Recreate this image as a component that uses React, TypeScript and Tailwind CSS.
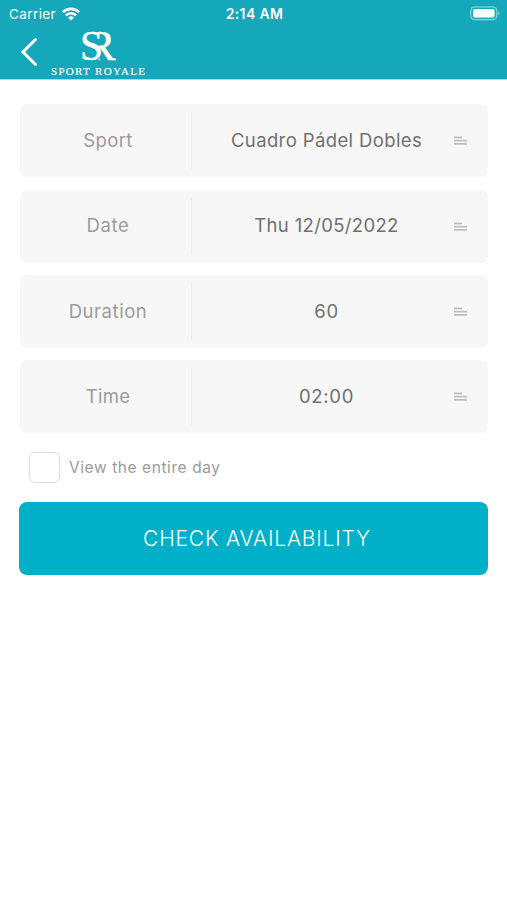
const rows = [
  { label: "Sport", value: "Cuadro Pádel Dobles", labelClass: "tracking-[0.4px]", valueClass: "tracking-[0.38px]" },
  { label: "Date", value: "Thu 12/05/2022", labelClass: "tracking-[0.6px]", valueClass: "tracking-[0.35px]" },
  { label: "Duration", value: "60", labelClass: "tracking-[0.55px]", valueClass: "tracking-[0.8px]" },
  { label: "Time", value: "02:00", labelClass: "tracking-[0.3px]", valueClass: "tracking-[0.7px]" },
];

function WifiIcon() {
  return (
    <svg width="18" height="14" viewBox="0 0 18 14" fill="none" stroke="white" strokeWidth="2.6">
      <path d="M1 5.2C5.5 0.7 12.5 0.7 17 5.2" />
      <path d="M3.8 8.4C6.8 5.5 11.2 5.5 14.2 8.4" />
      <path d="M6.1 10.5C7.8 8.9 10.2 8.9 11.9 10.5L9 13.4Z" fill="white" stroke="none" />
    </svg>
  );
}

function BatteryIcon() {
  return (
    <svg width="31" height="15" viewBox="0 0 31 15" fill="none">
      <rect x="1.8" y="1" width="26" height="12.6" rx="3.8" stroke="white" strokeOpacity="0.4" strokeWidth="1.6" />
      <rect x="4" y="3" width="21.6" height="8.6" rx="1.8" fill="white" />
      <path d="M29.2 5V9.6C31 8.8 31 5.8 29.2 5Z" fill="white" fillOpacity="0.4" />
    </svg>
  );
}

function Logo() {
  return (
    <svg className="overflow-visible" width="98" height="50" viewBox="0 0 98 50" fill="white" fontFamily="'Liberation Serif', serif">
      <defs>
        <clipPath id="bowl">
          <rect x="48.6" y="0" width="30" height="40" />
        </clipPath>
      </defs>
      <text x="30" y="32.8" fontSize="43" textLength="23" lengthAdjust="spacingAndGlyphs" stroke="white" strokeWidth="0.5">S</text>
      <g clipPath="url(#bowl)">
        <text x="36" y="32.8" fontSize="43" textLength="29.5" lengthAdjust="spacingAndGlyphs" stroke="white" strokeWidth="0.5">R</text>
      </g>
      <text x="1" y="47.8" fontSize="11" textLength="94" stroke="white" strokeWidth="0.15">SPORT ROYALE</text>
    </svg>
  );
}

function ListIcon() {
  return (
    <svg width="13" height="10" viewBox="0 0 13 10" fill="#bdbdbd">
      <rect y="0.6" width="8" height="1.7" />
      <rect y="3.8" width="13" height="1.7" />
      <rect y="7" width="13" height="1.7" />
    </svg>
  );
}

export default function App() {
  return (
    <div className="flex h-[900px] w-[507px] flex-col bg-white font-['Inter',sans-serif]">
      <header className="h-[80px] shrink-0 border-b border-[#9fdfe8] bg-[#15a8ba] text-white">
        <div className="grid h-[27px] grid-cols-3 items-center pr-[7px] pl-[9px] text-[13.5px]">
          <div className="flex items-center gap-[6px]">
            <span className="pt-px tracking-[0.4px]">Carrier</span>
            <WifiIcon />
          </div>
          <span className="text-center text-[14px] font-semibold tracking-[0.35px]">2:14 AM</span>
          <div className="flex justify-end">
            <BatteryIcon />
          </div>
        </div>
        <div className="flex pl-[20px]">
          <svg className="mt-[10px]" width="18" height="30" viewBox="0 0 18 30" fill="none" stroke="white" strokeWidth="3" strokeLinecap="round">
            <path d="M15.5 2.5L3 15L15.5 27.5" />
          </svg>
          <div className="ml-[12px]">
            <Logo />
          </div>
        </div>
      </header>
      <main className="flex flex-col pt-[24.05px] pr-[19px] pl-[20px]">
        <div className="flex flex-col gap-[12.48px]">
          {rows.map((row) => (
            <div key={row.label} className="flex h-[73px] items-center rounded-[7px] bg-[#f7f7f7] text-[18.5px]">
              <div className="flex h-[57px] w-[172px] items-center justify-center border-r border-[#eeeeee] pl-[5px] text-[#9b9b9b]">
                <span className={row.labelClass}>{row.label}</span>
              </div>
              <div className="flex-1 pl-[7px] text-center text-[#707070]">
                <span className={row.valueClass}>{row.value}</span>
              </div>
              <div className="w-[34px] pt-px">
                <ListIcon />
              </div>
            </div>
          ))}
        </div>
        <label className="mt-[18.5px] flex items-center pl-[9px]">
          <span className="size-[31px] rounded-[6px] border border-[#dddddd] bg-white" />
          <span className="ml-[9px] text-[15.5px] tracking-[0.58px] text-[#9b9b9b]">View the entire day</span>
        </label>
        <button className="-ml-px mt-[19px] h-[73px] rounded-[8px] bg-[#00b0c9] pl-[7px] text-[21px] font-[350] tracking-[0.8px] text-white">
          CHECK AVAILABILITY
        </button>
      </main>
    </div>
  );
}
